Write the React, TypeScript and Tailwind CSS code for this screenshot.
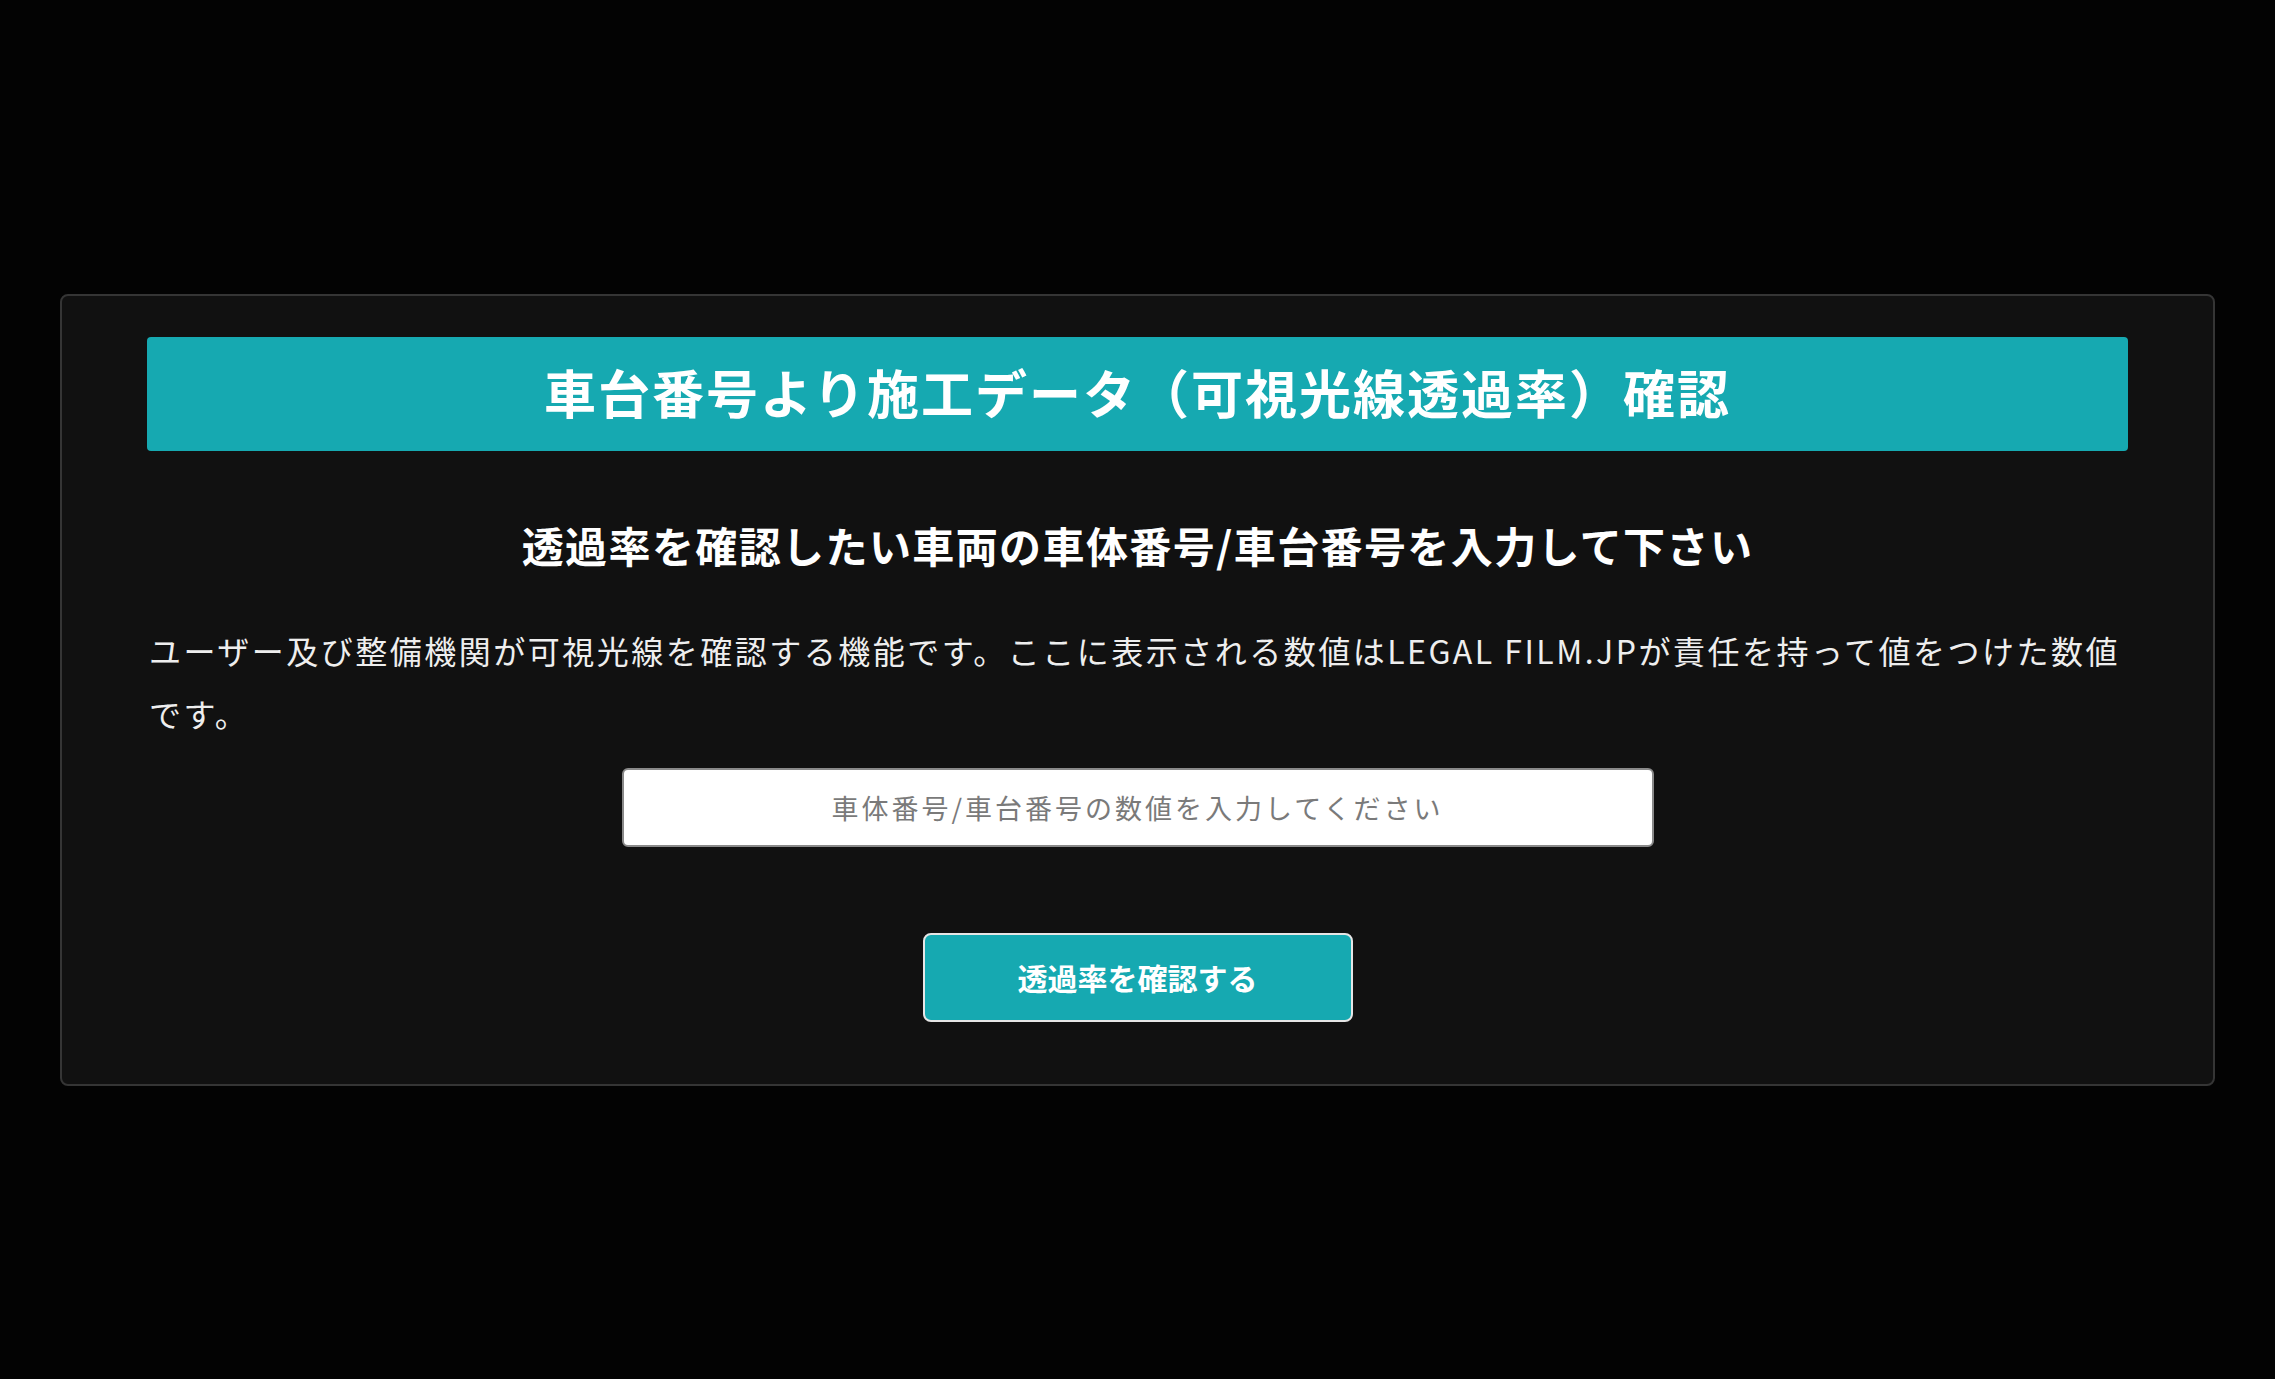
import React from "react";

export default function App() {
  return (
    <div className="min-h-screen w-full bg-[#030303] flex items-center px-[60px] font-['Noto_Sans_CJK_JP','Noto_Sans',sans-serif]">
      <div className="w-full rounded-[8px] border-2 border-[#353535] bg-[#111111] px-[85px] pt-[41px] pb-[62px] flex flex-col">
        <div className="h-[114px] rounded-[4px] bg-[#16a9b1] flex items-center justify-center pb-[4px]">
          <h1 className="text-[52px] leading-none font-bold tracking-[2px] text-white">
            車台番号より施工データ（可視光線透過率）確認
          </h1>
        </div>
        <h2 className="mt-[64px] text-center text-[42px] leading-[60px] font-bold tracking-[1.4px] text-white">
          透過率を確認したい車両の車体番号/車台番号を入力して下さい
        </h2>
        <p className="mt-[44px] pl-[2px] text-[32px] leading-[63px] tracking-[2.5px] text-[#eeeeee] whitespace-nowrap">
          ユーザー及び整備機関が可視光線を確認する機能です。ここに表示される数値はLEGAL FILM.JPが責任を持って値をつけた数値
          <br />
          です。
        </p>
        <div className="mt-[23px] flex justify-center">
          <input
            type="text"
            placeholder="車体番号/車台番号の数値を入力してください"
            className="w-[1032px] h-[79px] rounded-[6px] border-2 border-[#8a8a8a] bg-white text-center text-[27px] tracking-[3px] text-[#333] placeholder:text-[#7a7a7a] outline-none"
          />
        </div>
        <div className="mt-[86px] flex justify-center">
          <button
            type="button"
            className="w-[430px] h-[89px] rounded-[8px] border-2 border-[#e6e6e6] bg-[#16a9b1] text-white text-[30px] font-bold"
          >
            透過率を確認する
          </button>
        </div>
      </div>
    </div>
  );
}
